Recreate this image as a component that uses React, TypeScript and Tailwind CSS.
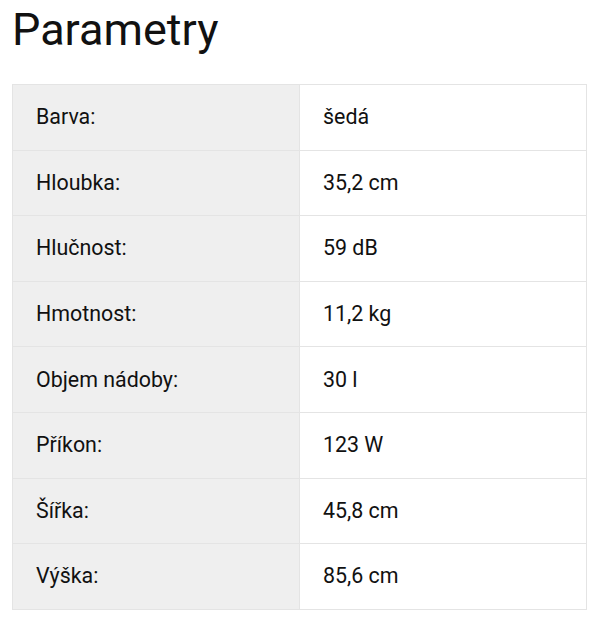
const params: [string, string][] = [
  ["Barva:", "šedá"],
  ["Hloubka:", "35,2 cm"],
  ["Hlučnost:", "59 dB"],
  ["Hmotnost:", "11,2 kg"],
  ["Objem nádoby:", "30 l"],
  ["Příkon:", "123 W"],
  ["Šířka:", "45,8 cm"],
  ["Výška:", "85,6 cm"],
];

export default function App() {
  return (
    <div className="min-h-screen bg-white px-3 text-[#111] [font-family:Roboto,'Liberation_Sans',sans-serif]">
      <h2 className="pt-[4px] text-[45px] font-normal leading-[52px]">Parametry</h2>
      <table className="mt-[28px] w-[575px] table-fixed border-collapse border border-[#e4e4e4] text-[21.4px]">
        <tbody>
          {params.map(([label, value]) => (
            <tr key={label} className="h-[65.6px]">
              <td className="w-1/2 border border-[#e4e4e4] bg-[#efefef] pl-[23px] pr-6 align-middle">{label}</td>
              <td className="w-1/2 border border-[#e4e4e4] bg-white pl-[23px] pr-6 align-middle">{value}</td>
            </tr>
          ))}
        </tbody>
      </table>
    </div>
  );
}
